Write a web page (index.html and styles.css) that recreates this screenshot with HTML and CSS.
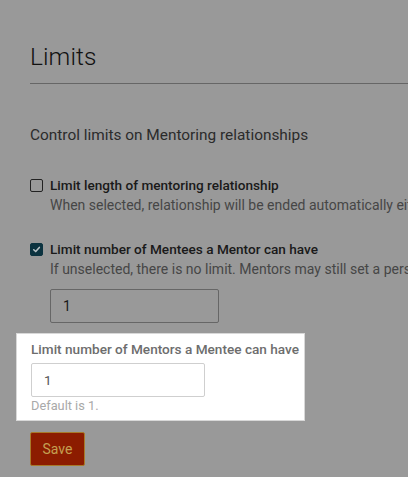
FILE: index.html
```html
<!DOCTYPE html>
<html>
<head>
<meta charset="utf-8">
<link rel="stylesheet" href="styles.css">
</head>
<body>
<div class="page">
  <h1 class="title">Limits</h1>
  <div class="rule"></div>
  <p class="intro">Control limits on Mentoring relationships</p>

  <div class="check-row">
    <span class="box"></span>
    <div class="check-text">
      <div class="check-label">Limit length of mentoring relationship</div>
      <div class="check-help">When selected, relationship will be ended automatically either after a set period</div>
    </div>
  </div>

  <div class="check-row second">
    <span class="box checked">
      <svg viewBox="0 0 14 14" width="14" height="14"><path d="M3.5 7.3 L6 9.6 L10.6 4.4" fill="none" stroke="#b9c3c6" stroke-width="2" stroke-linecap="round" stroke-linejoin="round"/></svg>
    </span>
    <div class="check-text">
      <div class="check-label">Limit number of Mentees a Mentor can have</div>
      <div class="check-help">If unselected, there is no limit. Mentors may still set a personal limit.</div>
      <div class="dim-input">1</div>
    </div>
  </div>

  <div class="highlight">
    <div class="hl-label">Limit number of Mentors a Mentee can have</div>
    <div class="hl-input">1</div>
    <div class="hl-help">Default is 1.</div>
  </div>

  <button class="save">Save</button>
</div>
</body>
</html>
```

FILE: styles.css
```css
html, body {
  margin: 0;
  padding: 0;
  background: #999999;
  overflow: hidden;
  width: 408px;
  height: 477px;
}
.page {
  padding: 0 0 0 30px;
  font-family: Roboto, "Liberation Sans", sans-serif;
  color: #1c1c1c;
}
.title {
  margin: 0;
  padding-top: 42px;
  font-size: 24.5px;
  font-weight: 300;
  line-height: 30px;
  color: #111;
  letter-spacing: 0.1px;
}
.rule {
  margin-top: 11px;
  height: 1px;
  background: #666;
  width: 400px;
}
.intro {
  margin: 41px 0 0 0;
  font-size: 15.4px;
  line-height: 20px;
  color: #2b2b2b;
}
.check-row {
  display: flex;
  align-items: flex-start;
  gap: 7px;
  margin-top: 30px;
  white-space: nowrap;
}
.check-row.second {
  margin-top: 24px;
}
.box {
  width: 11px;
  height: 11px;
  border: 1px solid #222;
  border-radius: 2px;
  margin-top: 4px;
  flex: none;
  display: flex;
  align-items: center;
  justify-content: center;
}
.box.checked {
  background: #0c3340;
  border-color: #0c3340;
}
.box svg {
  width: 11px;
  height: 11px;
}
.check-label {
  font-size: 13.6px;
  font-weight: 500;
  line-height: 20px;
  color: #1a1a1a;
}
.check-help {
  font-size: 14px;
  line-height: 20px;
  color: #464646;
}
.dim-input {
  margin-top: 10px;
  width: 155px;
  height: 32px;
  border: 1px solid #666;
  border-radius: 2px;
  padding-left: 12px;
  font-size: 14px;
  line-height: 32px;
  color: #1a1a1a;
}
.highlight {
  margin: 10px 0 0 -14px;
  width: 259px;
  padding: 5px 14px 5px 14px;
  background: #fff;
  border: 1px solid #d8d8d8;
  box-sizing: content-box;
}
.hl-label {
  font-size: 13.6px;
  font-weight: 500;
  line-height: 20px;
  color: #6d6d6d;
  white-space: nowrap;
}
.hl-input {
  margin-top: 4px;
  width: 160px;
  height: 32px;
  border: 1px solid #cfcfcf;
  border-radius: 2px;
  padding-left: 12px;
  font-size: 13.5px;
  line-height: 32px;
  color: #555;
}
.hl-help {
  font-size: 12.8px;
  line-height: 18px;
  color: #a9a9a9;
}
.save {
  display: block;
  margin-top: 11px;
  width: 55px;
  height: 34px;
  padding: 0;
  background: #8c1c00;
  border: 1px solid #a87a2a;
  border-radius: 2px;
  color: #c4a052;
  font-family: Roboto, "Liberation Sans", sans-serif;
  font-size: 14px;
}
```
